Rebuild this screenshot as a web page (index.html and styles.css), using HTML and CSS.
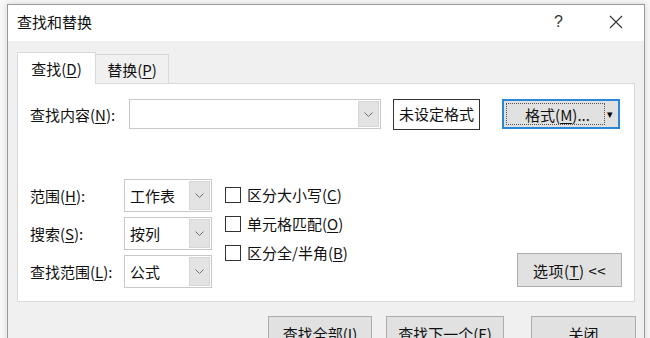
FILE: index.html
```html
<!DOCTYPE html>
<html lang="zh-CN">
<head>
    <meta charset="UTF-8">
    <meta name="viewport" content="width=device-width, initial-scale=1.0">
    <title>查找和替换</title>
    <link rel="stylesheet" href="styles.css">
</head>
<body>
    <div class="dialog">
        <div class="titlebar">
            <span class="title">查找和替换</span>
            <span class="help">?</span>
            <span class="close">
                <svg width="14" height="14" viewBox="0 0 14 14"><path d="M1 1 L13 13 M13 1 L1 13" stroke="#333" stroke-width="1.1" fill="none"/></svg>
            </span>
        </div>

        <div class="content">
            <div class="tabs">
                <div class="tab active">查找(<u>D</u>)</div>
                <div class="tab">替换(<u>P</u>)</div>
            </div>

            <div class="panel">
                <div class="find-row">
                    <label class="find-label">查找内容(<u>N</u>):</label>
                    <div class="combo find-combo">
                        <span class="combo-text"></span>
                        <span class="combo-btn"><svg width="9" height="5" viewBox="0 0 9 5"><path d="M0.5 0.5 L4.5 4.5 L8.5 0.5" stroke="#707070" fill="none"/></svg></span>
                    </div>
                    <div class="preview-box">未设定格式</div>
                    <div class="split-btn">
                        <span class="split-main"><span class="focus-rect">格式(<u>M</u>)...</span></span>
                        <span class="split-arrow">▾</span>
                    </div>
                </div>

                <div class="options">
                    <div class="fields">
                        <label>范围(<u>H</u>):</label>
                        <div class="combo">
                            <span class="combo-text">工作表</span>
                            <span class="combo-btn"><svg width="9" height="5" viewBox="0 0 9 5"><path d="M0.5 0.5 L4.5 4.5 L8.5 0.5" stroke="#707070" fill="none"/></svg></span>
                        </div>
                        <label>搜索(<u>S</u>):</label>
                        <div class="combo">
                            <span class="combo-text">按列</span>
                            <span class="combo-btn"><svg width="9" height="5" viewBox="0 0 9 5"><path d="M0.5 0.5 L4.5 4.5 L8.5 0.5" stroke="#707070" fill="none"/></svg></span>
                        </div>
                        <label>查找范围(<u>L</u>):</label>
                        <div class="combo">
                            <span class="combo-text">公式</span>
                            <span class="combo-btn"><svg width="9" height="5" viewBox="0 0 9 5"><path d="M0.5 0.5 L4.5 4.5 L8.5 0.5" stroke="#707070" fill="none"/></svg></span>
                        </div>
                    </div>

                    <div class="checks">
                        <div class="check"><span class="box"></span>区分大小写(<u>C</u>)</div>
                        <div class="check"><span class="box"></span>单元格匹配(<u>O</u>)</div>
                        <div class="check"><span class="box"></span>区分全/半角(<u>B</u>)</div>
                    </div>

                    <button class="btn options-btn">选项(<u>T</u>) &lt;&lt;</button>
                </div>
            </div>

            <div class="actions">
                <button class="btn find-all">查找全部(<u>I</u>)</button>
                <button class="btn find-next">查找下一个(<u>F</u>)</button>
                <button class="btn close-btn">关闭</button>
            </div>
        </div>
    </div>
</body>
</html>
```

FILE: styles.css
```css
body {
    margin: 0;
    background: #f7f7f7;
    font-family: "Noto Sans CJK SC", "Noto Sans", sans-serif;
    font-size: 15px;
    color: #111;
    overflow: hidden;
    height: 338px;
}

u {
    text-decoration-thickness: 1px;
    text-underline-offset: 2px;
}

.dialog {
    margin: 4px 0 0 7px;
    width: 636px;
    height: 400px;
    border: 1px solid #9a9a9a;
    background: #f0f0f0;
    box-shadow: 0 0 6px rgba(0, 0, 0, 0.15);
}

/* title bar */
.titlebar {
    height: 36px;
    background: #fff;
    display: flex;
    align-items: center;
    padding-left: 9px;
}

.title {
    flex-grow: 1;
    line-height: 20px;
    margin-top: -2px;
}

.help {
    font-family: "Liberation Sans", sans-serif;
    font-size: 16px;
    color: #333;
    margin-right: 46px;
    margin-top: -2px;
}

.close {
    display: flex;
    margin-right: 21px;
    margin-top: -2px;
}

.content {
    padding: 11px 9px 0 9px;
}

/* tabs */
.tabs {
    display: flex;
    align-items: flex-end;
    height: 31px;
}

.tab {
    height: 29px;
    width: 73px;
    line-height: 29px;
    text-align: center;
    white-space: nowrap;
    border: 1px solid #d9d9d9;
    border-bottom: none;
    border-left: none;
    background: #f0f0f0;
    box-sizing: border-box;
}

.tab.active {
    height: 32px;
    width: 79px;
    line-height: 32px;
    background: #fff;
    border-left: 1px solid #d9d9d9;
    position: relative;
    z-index: 1;
    margin-bottom: -1px;
}

/* panel */
.panel {
    background: #fff;
    border: 1px solid #d9d9d9;
    padding: 15px 11px 0 12px;
    box-sizing: border-box;
    height: 219px;
    display: flex;
    flex-direction: column;
}

.find-row {
    display: flex;
    align-items: center;
    height: 30px;
}

.find-label {
    width: 99px;
}

.combo {
    display: flex;
    height: 33px;
    border: 1px solid #c8c8c8;
    box-sizing: border-box;
    background: #fff;
    padding: 1px;
}

.find-combo {
    width: 252px;
    height: 30px;
}

.combo-text {
    flex-grow: 1;
    padding-left: 4px;
    line-height: 29px;
}

.combo-btn {
    width: 21px;
    background: #e3e3e3;
    border: 1px solid #d6d6d6;
    box-sizing: border-box;
    display: flex;
    align-items: center;
    justify-content: center;
}

.preview-box {
    margin-left: 12px;
    width: 87px;
    height: 31px;
    border: 1px solid #333;
    box-sizing: border-box;
    text-align: center;
    line-height: 28px;
}

.split-btn {
    margin-left: 22px;
    width: 118px;
    height: 30px;
    border: 2px solid #2a86d8;
    background: #e1e1e1;
    box-sizing: border-box;
    display: flex;
}

.split-main {
    flex-grow: 1;
    padding: 2px;
    display: flex;
}

.focus-rect {
    flex-grow: 1;
    border: 1px dotted #555;
    text-align: center;
    line-height: 21px;
    padding-left: 4px;
}

.split-arrow {
    width: 11px;
    font-size: 11px;
    line-height: 24px;
    text-align: left;
    color: #000;
}

/* options */
.options {
    display: flex;
    align-items: flex-start;
    margin-top: 50px;
}

.fields {
    display: grid;
    grid-template-columns: 94px 88px;
    grid-auto-rows: 33px;
    row-gap: 5px;
    align-items: center;
}

.checks {
    margin-left: 13px;
    margin-top: 8px;
    display: flex;
    flex-direction: column;
    gap: 13px;
}

.check {
    display: flex;
    align-items: center;
    height: 16px;
    line-height: 16px;
}

.box {
    width: 16px;
    height: 16px;
    border: 1px solid #333;
    box-sizing: border-box;
    margin-right: 6px;
}

.btn {
    font-family: inherit;
    font-size: 15px;
    color: #111;
    background: #e1e1e1;
    border: 1px solid #adadad;
    padding: 0;
    height: 34px;
}

.options-btn {
    width: 105px;
    margin-left: auto;
    margin-top: 74px;
    margin-right: 1px;
    letter-spacing: 0.5px;
}

/* bottom buttons */
.actions {
    display: flex;
    justify-content: flex-end;
    margin-top: 14px;
    margin-right: -1px;
}

.find-all {
    width: 104px;
}

.find-next {
    width: 118px;
    margin-left: 14px;
}

.close-btn {
    width: 105px;
    margin-left: 27px;
}
```
